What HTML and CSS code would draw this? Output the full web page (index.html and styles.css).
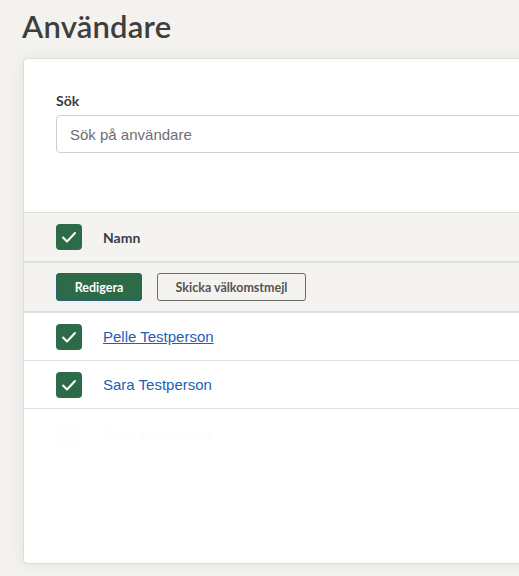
FILE: index.html
```html
<!DOCTYPE html>
<html lang="sv">
<head>
<meta charset="utf-8">
<title>Användare</title>
<link rel="stylesheet" href="styles.css">
</head>
<body>
<div class="page">
  <h1 class="title">Användare</h1>
  <div class="card">
    <div class="search">
      <label class="label" for="s">Sök</label>
      <input id="s" class="input" type="text" placeholder="Sök på användare">
    </div>
    <div class="table">
      <div class="row head">
        <span class="cb"><svg viewBox="0 0 26 26"><path d="M7 13.5l4 4 8-8.5" /></svg></span>
        <span class="th">Namn</span>
      </div>
      <div class="row actions">
        <button class="btn primary">Redigera</button>
        <button class="btn outline">Skicka välkomstmejl</button>
      </div>
      <div class="row item">
        <span class="cb"><svg viewBox="0 0 26 26"><path d="M7 13.5l4 4 8-8.5" /></svg></span>
        <a class="link underline" href="#">Pelle Testperson</a>
      </div>
      <div class="row item">
        <span class="cb"><svg viewBox="0 0 26 26"><path d="M7 13.5l4 4 8-8.5" /></svg></span>
        <a class="link" href="#">Sara Testperson</a>
      </div>
      <div class="row item ghost">
        <span class="cb plain"></span>
        <a class="link" href="#">Sara Testperson</a>
      </div>
    </div>
  </div>
</div>
</body>
</html>
```
FILE: styles.css
```css
html, body {
  margin: 0;
  padding: 0;
  overflow: hidden;
  background: #f3f2ef;
}
body {
  font-family: "Lato", "Liberation Sans", sans-serif;
  color: #3d3d3d;
}
.page {
  padding: 0 0 0 22px;
  height: 576px;
}
.title {
  margin: 0;
  padding-top: 8px;
  height: 58px;
  box-sizing: border-box;
  font-size: 31px;
  font-weight: 600;
  line-height: 36px;
  color: #3e3e3e;
  letter-spacing: 0.2px;
}
.card {
  margin-left: 1px;
  width: 560px;
  height: 506px;
  box-sizing: border-box;
  background: #fff;
  border: 1px solid #dcdcdc;
  border-radius: 4px;
  box-shadow: 0 0 14px rgba(0, 0, 0, 0.07);
}
.search {
  padding: 33px 0 0 32px;
  height: 153px;
  box-sizing: border-box;
}
.label {
  display: block;
  font-size: 14px;
  font-weight: 700;
  color: #3a3a3a;
  line-height: 17px;
  margin-bottom: 6px;
}
.input {
  display: block;
  width: 520px;
  height: 38px;
  box-sizing: border-box;
  border: 1px solid #cfcfd2;
  border-radius: 4px;
  padding: 0 13px;
  font-family: "Liberation Sans", Arial, sans-serif;
  font-size: 15px;
  color: #333;
  background: #fff;
}
.input::placeholder {
  color: #6e6e73;
}
.row {
  display: flex;
  align-items: center;
  padding-left: 32px;
  box-sizing: border-box;
}
.head {
  background: #f4f3f0;
  border-top: 1px solid #dedee0;
  border-bottom: 2px solid #dedee0;
  height: 51px;
}
.actions {
  background: #f4f3f0;
  border-bottom: 2px solid #dedee0;
  height: 50px;
  gap: 15px;
}
.item {
  height: 48px;
  border-bottom: 1px solid #e0e0e3;
}
.cb {
  width: 26px;
  height: 26px;
  border-radius: 4px;
  background: #2d6a47;
  flex: none;
  display: flex;
  margin-right: 21px;
}
.cb svg {
  width: 26px;
  height: 26px;
}
.cb path {
  fill: none;
  stroke: #fff;
  stroke-width: 2;
  stroke-linecap: round;
  stroke-linejoin: round;
}
.cb.plain {
  background: #ddd;
}
.th {
  font-size: 14px;
  font-weight: 700;
  color: #3b3b48;
}
.btn {
  height: 28px;
  box-sizing: border-box;
  border-radius: 3px;
  font-family: "Lato", sans-serif;
  font-size: 12.5px;
  font-weight: 700;
  cursor: pointer;
  padding: 0;
}
.primary {
  width: 86px;
  background: #2d6a47;
  border: 1px solid #26607a;
  color: #fff;
}
.outline {
  width: 149px;
  background: transparent;
  border: 1px solid #6c6c6c;
  color: #555;
}
.link {
  font-family: "Liberation Sans", Arial, sans-serif;
  font-size: 15px;
  color: #1a62b5;
  text-decoration: none;
}
.link.underline {
  text-decoration: underline;
}
.ghost {
  opacity: 0.012;
  border-bottom: none;
  height: 50px;
}
```
